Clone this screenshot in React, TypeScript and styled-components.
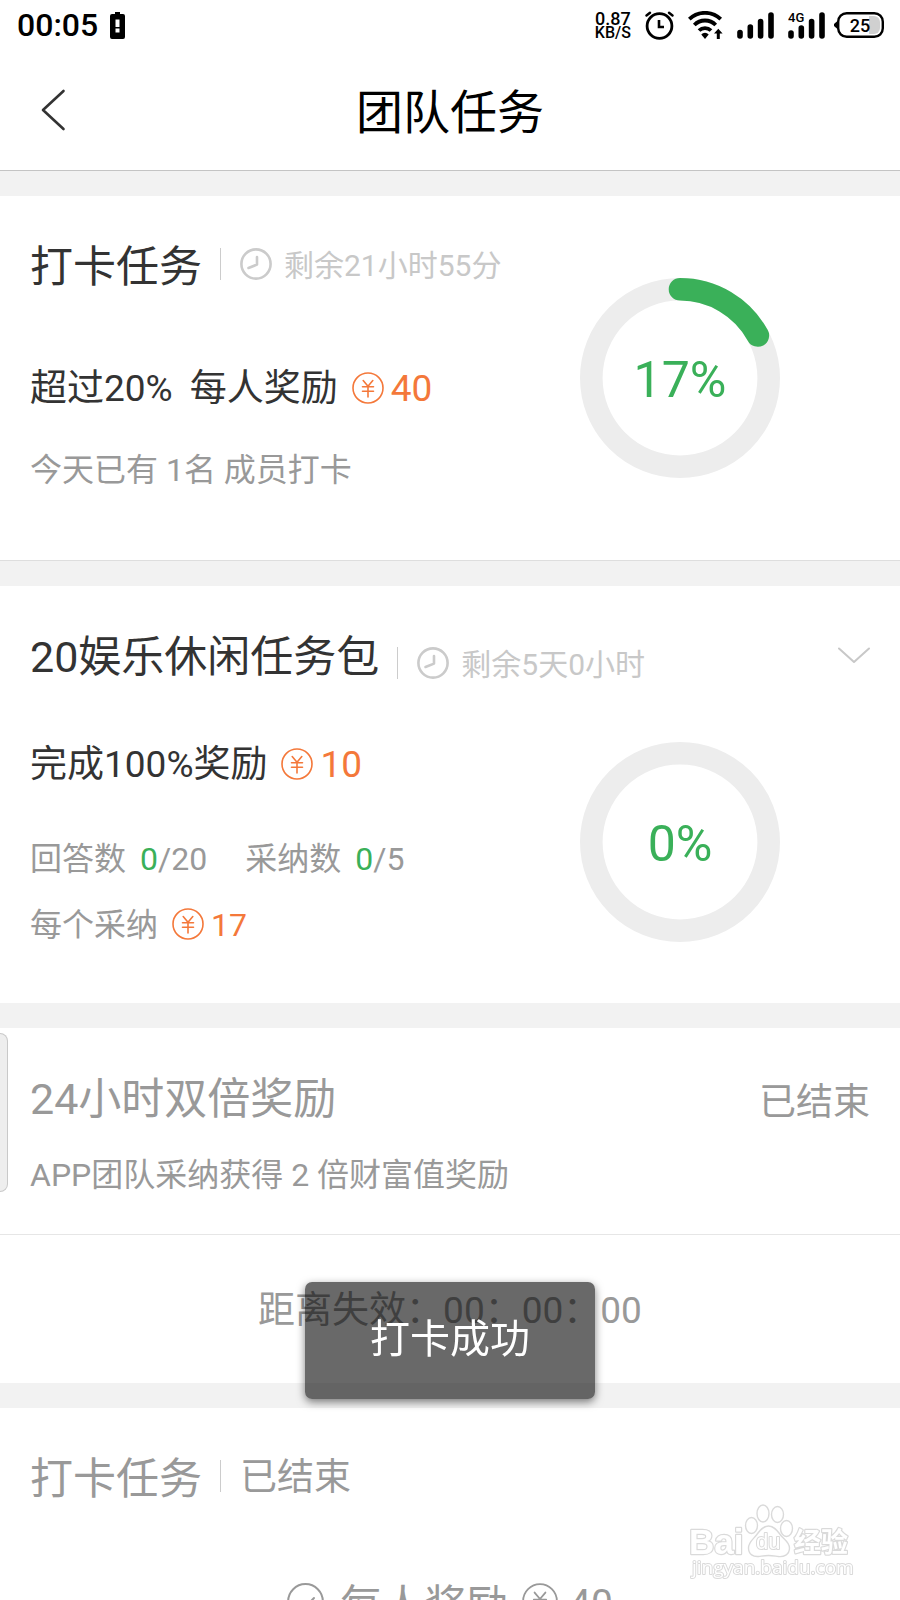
import React from "react";
import styled, { createGlobalStyle } from "styled-components";

const color = {
  ink: "#333",
  muted: "#999",
  faint: "#c8c8c8",
  green: "#3ab059",
  orange: "#f4783a",
  band: "#f2f2f2",
  track: "#ededed",
};

const GlobalStyle = createGlobalStyle`
  * { box-sizing: border-box; }
  body {
    margin: 0;
    background: #fff;
    color: ${color.ink};
    font-family: Roboto, "Noto Sans CJK SC", sans-serif;
  }
  h1, h2, p { margin: 0; font-weight: 400; }
  button { border: 0; padding: 0; background: none; font: inherit; color: inherit; cursor: pointer; }
  svg { display: block; flex: none; }
`;

const Screen = styled.div`
  display: flex;
  flex-direction: column;
  height: 100vh;
  overflow: hidden;
`;

const StatusBar = styled.div`
  display: flex;
  justify-content: space-between;
  align-items: center;
  height: 50px;
  padding: 0 16px 0 17px;
  color: #000;
`;

const StatusLeft = styled.div`
  display: flex;
  align-items: center;
  gap: 12px;
  font-size: 32px;
  line-height: 50px;
  font-weight: 500;
`;

const StatusRight = styled.div`
  display: flex;
  align-items: center;
  gap: 14px;
`;

const Cellular = styled.div`
  display: flex;
  align-items: center;
  gap: 9px;
`;

const Speed = styled.div`
  display: flex;
  flex-direction: column;
  align-items: center;
  padding-top: 2px;
  font-size: 16px;
  line-height: 14px;
  font-weight: 500;
`;

const SpeedValue = styled.span`
  font-size: 18px;
`;

const NavBar = styled.header`
  display: grid;
  grid-template-columns: 1fr auto 1fr;
  align-items: center;
  height: 121px;
  flex: none;
  padding: 0 30px;
  border-bottom: 1px solid #c4c4c4;
`;

const BackButton = styled.button`
  justify-self: start;
  padding: 10px;
`;

const PageTitle = styled.h1`
  padding-top: 6px;
  font-size: 47px;
  line-height: 60px;
  color: #000;
`;

const Content = styled.main`
  flex: 1;
  min-height: 0;
  overflow-y: auto;
  scrollbar-width: none;
  background: ${color.band};
  display: flex;
  flex-direction: column;
  gap: 25px;
  padding-top: 25px;
`;

const Card = styled.section<{ $bottom: number; $muted?: boolean; $lined?: boolean }>`
  flex: none;
  padding: 44px 30px ${(p) => p.$bottom}px;
  background: #fff;
  color: ${(p) => (p.$muted ? color.muted : color.ink)};
  border-bottom: ${(p) => (p.$lined ? "1px solid #dedede" : "0")};
`;

const Columns = styled.div`
  display: flex;
  justify-content: space-between;
  align-items: flex-start;
`;

const CardHead = styled.div`
  display: flex;
  align-items: flex-start;
`;

const CardTitle = styled.h2`
  padding-top: 1px;
  font-size: 43px;
  line-height: 52px;
`;

const Meta = styled.div<{ $low?: boolean }>`
  display: flex;
  align-items: center;
  gap: 12px;
  height: 32px;
  margin-left: 18px;
  padding-left: 19px;
  margin-top: ${(p) => (p.$low ? 17 : 8)}px;
  border-left: 1px solid #ccc;
  color: ${color.faint};
  font-size: 30px;
  line-height: 32px;
  > span { padding-top: 4px; }
`;

const Ended = styled.span`
  color: ${color.muted};
  font-size: 37px;
  line-height: 46px;
`;

const PushRight = styled.div<{ $top: number }>`
  margin-left: auto;
  padding-top: ${(p) => p.$top}px;
`;

const Reward = styled.p<{ $top: number; $small?: boolean }>`
  display: flex;
  align-items: center;
  margin-top: ${(p) => p.$top}px;
  font-size: ${(p) => (p.$small ? 32 : 37)}px;
  line-height: ${(p) => (p.$small ? 40 : 46)}px;
  color: ${(p) => (p.$small ? color.muted : color.ink)};
`;

const Spaced = styled.span`
  margin-left: 17px;
`;

const Amount = styled.span`
  display: inline-flex;
  align-items: center;
  gap: 7px;
  margin-left: 14px;
  color: ${color.orange};
  > svg { margin-bottom: 3px; }
`;

const Note = styled.p<{ $top: number }>`
  margin-top: ${(p) => p.$top}px;
  font-size: 32px;
  line-height: 42px;
  color: ${color.muted};
`;

const Counters = styled(Note)`
  display: flex;
  gap: 38px;
`;

const Counter = styled.span`
  display: flex;
  gap: 14px;
`;

const Done = styled.span`
  color: ${color.green};
`;

const RingBox = styled.div<{ $top?: number }>`
  display: grid;
  place-items: center;
  margin: ${(p) => p.$top ?? 0}px 90px 0 0;
  > * { grid-area: 1 / 1; }
`;

const RingLabel = styled.span`
  padding-top: 4px;
  font-size: 50px;
  line-height: 60px;
  color: ${color.green};
`;

const Body = styled(Columns)`
  margin-top: 59px;
`;

const Countdown = styled.p`
  margin: 38px -30px 0;
  border-top: 1px solid #e6e6e6;
  padding: 53px 0 49px;
  font-size: 37px;
  line-height: 46px;
  text-align: center;
`;

const Result = styled.p`
  display: flex;
  justify-content: center;
  align-items: flex-start;
  margin-top: 73px;
  font-size: 42px;
  line-height: 52px;
  > svg { margin-top: 5px; }
`;

const ResultText = styled.span`
  margin: 2px 14px 0 16px;
`;

const ResultAmount = styled.span`
  margin-left: 11px;
  font-size: 39px;
`;

const Toast = styled.div`
  position: fixed;
  left: 50%;
  bottom: 201px;
  transform: translateX(-50%);
  padding: 30px 65px 31px;
  border-radius: 7px;
  background: rgba(0, 0, 0, 0.59);
  box-shadow: 0 3px 8px rgba(0, 0, 0, 0.5);
  color: #fff;
  font-size: 40px;
  line-height: 56px;
  white-space: nowrap;
`;

const SideTab = styled.button`
  position: fixed;
  left: 0;
  top: 1033px;
  width: 8px;
  height: 159px;
  border: 1px solid #c9c9c9;
  border-left: 0;
  border-radius: 0 8px 8px 0;
  background: #eee;
`;

const Watermark = styled.svg`
  position: fixed;
  right: 46px;
  bottom: 20px;
`;

const Clock = () => (
  <svg width="32" height="32" viewBox="0 0 32 32" fill="none" stroke="#cbcbcb" strokeWidth="2.6" strokeLinecap="round" strokeLinejoin="round">
    <circle cx="16" cy="16" r="14.6" />
    <path d="M17 9v7.6L8.5 20" />
  </svg>
);

const Coin = ({ size = 32, stroke = color.orange }: { size?: number; stroke?: string }) => (
  <svg width={size} height={size} viewBox="0 0 32 32" fill="none" stroke={stroke} strokeWidth="1.6" strokeLinecap="round">
    <circle cx="16" cy="16" r="15" />
    <path d="M11.2 8.5l4.8 5.7L20.8 8.5M16 14.2V25M10.5 14.8h11M10.5 19.2h11" />
  </svg>
);

const Ring = ({ value, top }: { value: number; top?: number }) => {
  const r = 88.7;
  const length = 2 * Math.PI * r;
  return (
    <RingBox $top={top}>
      <svg width="200" height="200" viewBox="0 0 200 200" fill="none" strokeWidth="22.6">
        <circle cx="100" cy="100" r={r} stroke={color.track} />
        {value > 0 && (
          <circle
            cx="100"
            cy="100"
            r={r}
            stroke={color.green}
            strokeLinecap="round"
            strokeDasharray={`${(length * value) / 100} ${length}`}
            transform="rotate(-90 100 100)"
          />
        )}
      </svg>
      <RingLabel>{value}%</RingLabel>
    </RingBox>
  );
};

const LowBattery = () => (
  <svg width="15" height="27" viewBox="0 0 15 27">
    <path d="M5 0h5v2h3a2 2 0 0 1 2 2v21a2 2 0 0 1-2 2H2a2 2 0 0 1-2-2V4a2 2 0 0 1 2-2h3z" fill="#000" />
    <path d="M5.5 7.5h4v7.5h-4zM5.5 16.5h4v4h-4z" fill="#fff" />
  </svg>
);

const Alarm = () => (
  <svg width="29" height="29" viewBox="0 0 29 29" fill="none" stroke="#000" strokeLinecap="round">
    <circle cx="14.5" cy="15" r="12.4" strokeWidth="2.8" />
    <path d="M14 9v7h5" strokeWidth="2.6" strokeLinecap="butt" />
    <path d="M1.5 4.5L5 1.7M24 1.7l3.5 2.8" strokeWidth="2.4" />
  </svg>
);

const Wifi = () => (
  <svg width="35" height="28" viewBox="0 0 35 28" fill="none" stroke="#000" strokeWidth="3.8">
    <path d="M1.3 8.2a22.5 22.5 0 0 1 31.4 0" />
    <path d="M6.3 14a15 15 0 0 1 21.4 0" />
    <path d="M11 19.5a8.6 8.6 0 0 1 12 0" />
    <path d="M13.3 23.4a5 5 0 0 1 7.4 0L17 28z" fill="#000" stroke="none" />
    <path d="M26 22.5l4.300-4.800 4.300 4.800h-2.800V28h-3v-5.500z" fill="#000" stroke="none" />
  </svg>
);

const Signal = ({ label }: { label?: string }) => (
  <svg width="37" height="28" viewBox="0 0 37 28">
    <g stroke="#000" strokeWidth="5.6" strokeLinecap="round">
      <path d={label ? "M3 22v3" : "M3 21.5v3.5"} />
      <path d={label ? "M13.3 17v8" : "M13.3 16v9"} />
      <path d="M23.6 10.5v14.5M34 4v21" />
    </g>
    {label && (
      <text x="0" y="11" fontFamily="Roboto, sans-serif" fontSize="13" fontWeight="500">
        {label}
      </text>
    )}
  </svg>
);

const Battery = ({ level }: { level: number }) => (
  <svg width="50" height="26" viewBox="0 0 50 26">
    <path d="M35 4h5a6 6 0 0 1 6 6v6a6 6 0 0 1-6 6h-5z" fill="#d0d0d0" />
    <rect x="4.2" y="1.2" width="44.6" height="23.6" rx="8.5" fill="none" stroke="#000" strokeWidth="2.4" />
    <path d="M4 8.500L0 12v2l4 3.500z" />
    <text x="26" y="19.5" textAnchor="middle" fontFamily="Roboto, sans-serif" fontSize="18" fontWeight="500">
      {level}
    </text>
  </svg>
);

const BaiduMark = () => (
  <Watermark width="164" height="80" viewBox="0 0 164 80" fill="#fff" stroke="#dadada" strokeWidth="1.4" strokeLinejoin="round">
    <ellipse cx="61.5" cy="25.5" rx="6" ry="8" />
    <ellipse cx="73" cy="13.5" rx="6" ry="8.5" />
    <ellipse cx="87.5" cy="14.5" rx="6" ry="8" />
    <ellipse cx="96.5" cy="28.5" rx="6" ry="8" />
    <path d="M78.5 26c6 0 9 5 12 9s9 7 9 13c0 7-6 9-11 8.5-4-.5-6-1-10-1s-6 .5-10 1c-5 .5-10-2-10-8.5 0-6 5-9 8-13s6-9 12-9z" />
    <g paintOrder="stroke" fontFamily='"Liberation Sans", "Noto Sans CJK SC", sans-serif' fontWeight="700">
      <text x="-1" y="54" fontSize="35" strokeWidth="2.4">Bai</text>
      <text x="66" y="49" fontSize="22" strokeWidth="2" fontWeight="400">du</text>
      <text x="104" y="52" fontSize="27" strokeWidth="2.4">经验</text>
      <text x="2" y="74" fontSize="19" strokeWidth="2" fontWeight="400" fontFamily='"Open Sans", sans-serif'>
        jingyan.baidu.com
      </text>
    </g>
  </Watermark>
);

export default function App() {
  return (
    <Screen>
      <GlobalStyle />
      <StatusBar>
        <StatusLeft>
          <span>00:05</span>
          <LowBattery />
        </StatusLeft>
        <StatusRight>
          <Speed>
            <SpeedValue>0.87</SpeedValue>
            <span>KB/S</span>
          </Speed>
          <Alarm />
          <Wifi />
          <Signal />
          <Cellular>
            <Signal label="4G" />
            <Battery level={25} />
          </Cellular>
        </StatusRight>
      </StatusBar>
      <NavBar>
        <BackButton aria-label="返回">
          <svg width="26" height="42" viewBox="0 0 26 42" fill="none" stroke="#333" strokeWidth="2.6" strokeLinecap="round" strokeLinejoin="round">
            <path d="M23.5 2L3 21l20.5 19" />
          </svg>
        </BackButton>
        <PageTitle>团队任务</PageTitle>
      </NavBar>

      <Content>
        <Card $bottom={69} $lined>
          <Columns>
            <div>
              <CardHead>
                <CardTitle>打卡任务</CardTitle>
                <Meta>
                  <Clock />
                  <span>剩余21小时55分</span>
                </Meta>
              </CardHead>
              <Reward $top={73}>
                <span>超过20%</span>
                <Spaced>每人奖励</Spaced>
                <Amount>
                  <Coin />
                  40
                </Amount>
              </Reward>
              <Note $top={37}>今天已有 1名 成员打卡</Note>
            </div>
            <Ring value={17} top={38} />
          </Columns>
        </Card>

        <Card $bottom={58}>
          <CardHead>
            <CardTitle>20娱乐休闲任务包</CardTitle>
            <Meta $low>
              <Clock />
              <span>剩余5天0小时</span>
            </Meta>
            <PushRight $top={17}>
              <button aria-label="展开">
                <svg width="32" height="18" viewBox="0 0 32 18" fill="none" stroke="#c8c8c8" strokeWidth="2" strokeLinecap="round" strokeLinejoin="round">
                  <path d="M1 1.5l15 13.5L31 1.5" />
                </svg>
              </button>
            </PushRight>
          </CardHead>
          <Body>
            <div>
              <Reward $top={0}>
                <span>完成100%奖励</span>
                <Amount>
                  <Coin />
                  10
                </Amount>
              </Reward>
              <Counters $top={50}>
                <Counter>
                  <span>回答数</span>
                  <span>
                    <Done>0</Done>/20
                  </span>
                </Counter>
                <Counter>
                  <span>采纳数</span>
                  <span>
                    <Done>0</Done>/5
                  </span>
                </Counter>
              </Counters>
              <Reward $top={25} $small>
                <span>每个采纳</span>
                <Amount>
                  <Coin />
                  17
                </Amount>
              </Reward>
            </div>
            <Ring value={0} />
          </Body>
        </Card>

        <Card $bottom={0} $muted>
          <CardHead>
            <CardTitle>24小时双倍奖励</CardTitle>
            <PushRight $top={8}>
              <Ended>已结束</Ended>
            </PushRight>
          </CardHead>
          <Note $top={28}>APP团队采纳获得 2 倍财富值奖励</Note>
          <Countdown>距离失效：00：00：00</Countdown>
        </Card>

        <Card $bottom={44} $muted>
          <CardHead>
            <CardTitle>打卡任务</CardTitle>
            <Meta>
              <Ended>已结束</Ended>
            </Meta>
          </CardHead>
          <Result>
            <svg width="37" height="37" viewBox="0 0 37 37" fill="none" stroke="#999" strokeWidth="2" strokeLinecap="round" strokeLinejoin="round">
              <circle cx="18.5" cy="18.5" r="17.4" />
              <path d="M10 21.5l6 5 11-11.5" />
            </svg>
            <ResultText>每人奖励</ResultText>
            <Coin size={36} stroke={color.muted} />
            <ResultAmount>40</ResultAmount>
          </Result>
        </Card>
      </Content>

      <SideTab aria-label="侧边栏" />
      <Toast role="status">打卡成功</Toast>
      <BaiduMark />
    </Screen>
  );
}
